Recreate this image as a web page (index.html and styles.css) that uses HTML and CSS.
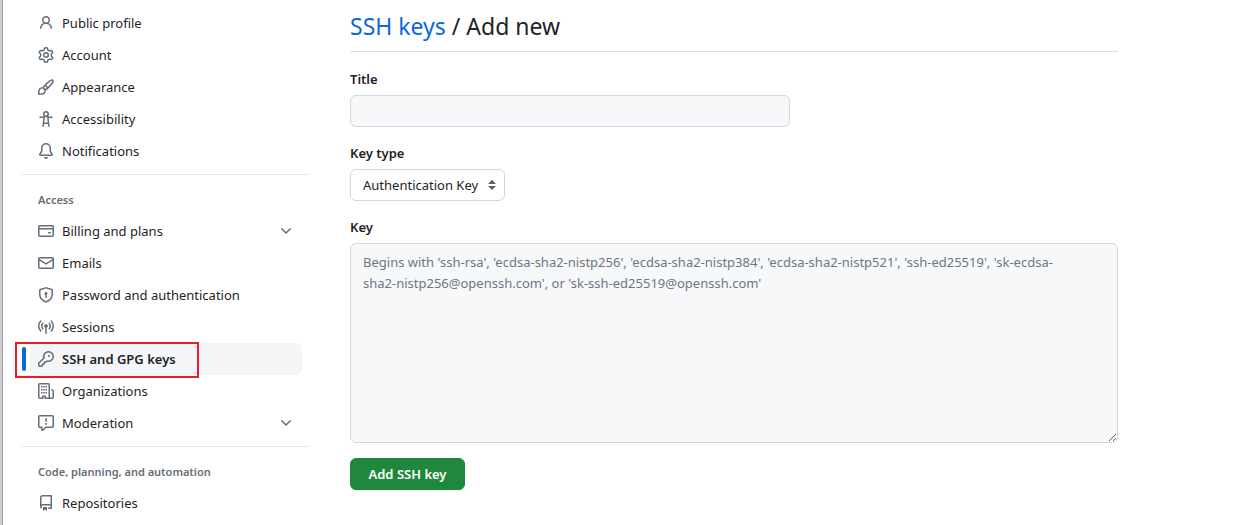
FILE: index.html
```html
<!DOCTYPE html>
<html lang="en">
<head>
  <meta charset="UTF-8">
  <meta name="viewport" content="width=device-width, initial-scale=1">
  <title>Add new SSH key</title>
  <link rel="stylesheet" href="styles.css">
</head>
<body>
  <div class="layout">
    <nav class="sidebar" aria-label="Settings">
      <ul class="nav-list">
        <li><a class="nav-item" href="#profile">
          <svg class="icon" viewBox="0 0 16 16"><path d="M10.561 8.073a6.005 6.005 0 0 1 3.432 5.142.75.75 0 1 1-1.498.07 4.5 4.5 0 0 0-8.99 0 .75.75 0 0 1-1.498-.07 6.004 6.004 0 0 1 3.431-5.142 3.999 3.999 0 1 1 5.123 0ZM10.5 5a2.5 2.5 0 1 0-5 0 2.5 2.5 0 0 0 5 0Z"/></svg>
          <span>Public profile</span>
        </a></li>
        <li><a class="nav-item" href="#account">
          <svg class="icon" viewBox="0 0 16 16"><path d="M8 0a8.2 8.2 0 0 1 .701.031C9.444.095 9.99.645 10.16 1.29l.288 1.107c.018.066.079.158.212.224.231.114.454.243.668.386.123.082.233.09.299.071l1.103-.303c.644-.176 1.392.021 1.82.63.27.385.506.792.704 1.218.315.675.111 1.422-.364 1.891l-.814.806c-.049.048-.098.147-.088.294.016.257.016.515 0 .772-.01.147.038.246.088.294l.814.806c.475.469.679 1.216.364 1.891a7.977 7.977 0 0 1-.704 1.217c-.428.61-1.176.807-1.82.63l-1.102-.302c-.067-.019-.177-.011-.3.071a5.909 5.909 0 0 1-.668.386c-.133.066-.194.158-.211.224l-.29 1.106c-.168.646-.715 1.196-1.458 1.26a8.006 8.006 0 0 1-1.402 0c-.743-.064-1.289-.614-1.458-1.26l-.289-1.106c-.018-.066-.079-.158-.212-.224a5.738 5.738 0 0 1-.668-.386c-.123-.082-.233-.09-.299-.071l-1.103.303c-.644.176-1.392-.021-1.82-.63a8.12 8.12 0 0 1-.704-1.218c-.315-.675-.111-1.422.363-1.891l.815-.806c.05-.048.098-.147.088-.294a6.214 6.214 0 0 1 0-.772c.01-.147-.038-.246-.088-.294l-.815-.806C.635 6.045.431 5.298.746 4.623a7.92 7.92 0 0 1 .704-1.217c.428-.61 1.176-.807 1.82-.63l1.102.302c.067.019.177.011.3-.071.214-.143.437-.272.668-.386.133-.066.194-.158.211-.224l.29-1.106C6.009.645 6.556.095 7.299.03 7.53.01 7.764 0 8 0Zm-.571 1.525c-.036.003-.108.036-.137.146l-.289 1.105c-.147.561-.549.967-.998 1.189-.173.086-.34.183-.5.29-.417.278-.97.423-1.529.27l-1.103-.303c-.109-.03-.175.016-.195.045-.22.312-.412.644-.573.99-.014.031-.021.11.059.19l.815.806c.411.406.562.957.53 1.456a4.709 4.709 0 0 0 0 .582c.032.499-.119 1.05-.53 1.456l-.815.806c-.081.08-.073.159-.059.19.162.346.353.677.573.989.02.03.085.076.195.046l1.102-.303c.56-.153 1.113-.008 1.53.27.161.107.328.204.501.29.447.222.85.629.997 1.189l.289 1.105c.029.109.101.143.137.146a6.6 6.6 0 0 0 1.142 0c.036-.003.108-.036.137-.146l.289-1.105c.147-.561.549-.967.998-1.189.173-.086.34-.183.5-.29.417-.278.97-.423 1.529-.27l1.103.303c.109.029.175-.016.195-.045.22-.313.411-.644.573-.99.014-.031.021-.11-.059-.19l-.815-.806c-.411-.406-.562-.957-.53-1.456a4.709 4.709 0 0 0 0-.582c-.032-.499.119-1.05.53-1.456l.815-.806c.081-.08.073-.159.059-.19a6.464 6.464 0 0 0-.573-.989c-.02-.03-.085-.076-.195-.046l-1.102.303c-.56.153-1.113.008-1.53-.27a4.44 4.44 0 0 0-.501-.29c-.447-.222-.85-.629-.997-1.189l-.289-1.105c-.029-.11-.101-.143-.137-.146a6.6 6.6 0 0 0-1.142 0ZM11 8a3 3 0 1 1-6 0 3 3 0 0 1 6 0ZM9.5 8a1.5 1.5 0 1 0-3.001.001A1.5 1.5 0 0 0 9.5 8Z"/></svg>
          <span>Account</span>
        </a></li>
        <li><a class="nav-item" href="#appearance">
          <svg class="icon" viewBox="0 0 16 16"><path d="M11.134 1.535c.7-.509 1.416-.942 2.076-1.155.649-.21 1.463-.267 2.069.34.603.601.568 1.411.368 2.07-.202.668-.624 1.39-1.125 2.096-1.011 1.424-2.496 2.987-3.775 4.249-1.098 1.084-2.132 1.839-3.04 2.3a3.744 3.744 0 0 1-1.055 3.217c-.431.431-1.065.691-1.657.861-.614.177-1.294.287-1.914.357A21.151 21.151 0 0 1 .797 16H.743l.007-.75H.749L.742 16a.75.75 0 0 1-.743-.742l.743-.008-.742.007v-.054a21.25 21.25 0 0 1 .13-2.284c.067-.647.187-1.287.358-1.914.17-.591.43-1.226.86-1.657a3.746 3.746 0 0 1 3.227-1.054c.466-.893 1.225-1.907 2.314-2.982 1.271-1.255 2.833-2.75 4.245-3.777ZM1.62 13.089c-.051.464-.086.929-.104 1.395.466-.018.932-.053 1.396-.104a10.511 10.511 0 0 0 1.668-.309c.526-.151.856-.325 1.011-.48a2.25 2.25 0 1 0-3.182-3.182c-.155.155-.329.485-.48 1.01a10.515 10.515 0 0 0-.309 1.67Zm10.396-10.34c-1.224.89-2.605 2.189-3.822 3.384l1.718 1.718c1.21-1.205 2.51-2.597 3.387-3.833.47-.662.78-1.227.912-1.662.134-.444.032-.551.009-.575h-.001V1.78c-.014-.014-.113-.113-.548.027-.432.14-.995.462-1.655.942Zm-4.832 7.266-.001.001a9.859 9.859 0 0 0 1.63-1.142L7.155 7.216a9.7 9.7 0 0 0-1.161 1.607c.482.302.889.71 1.19 1.192Z"/></svg>
          <span>Appearance</span>
        </a></li>
        <li><a class="nav-item" href="#accessibility">
          <svg class="icon" viewBox="0 0 16 16"><path d="M9.923 5.302c.063.063.122.129.178.198H14A.75.75 0 0 1 14 7h-3.3l.578 5.163.362 2.997a.75.75 0 0 1-1.49.18L9.868 13H6.132l-.282 2.34a.75.75 0 0 1-1.49-.18l.362-2.997L5.3 7H2a.75.75 0 0 1 0-1.5h3.9a2.54 2.54 0 0 1 .176-.198 3 3 0 1 1 3.847 0ZM9.2 7.073h-.001a1.206 1.206 0 0 0-2.398 0L6.305 11.5h3.39ZM9.5 3a1.5 1.5 0 1 0-3.001.001A1.5 1.5 0 0 0 9.5 3Z"/></svg>
          <span>Accessibility</span>
        </a></li>
        <li><a class="nav-item" href="#notifications">
          <svg class="icon" viewBox="0 0 16 16"><path d="M8 16a2 2 0 0 0 1.985-1.75c.017-.137-.097-.25-.235-.25h-3.5c-.138 0-.252.113-.235.25A2 2 0 0 0 8 16ZM3 5a5 5 0 0 1 10 0v2.947c0 .05.015.098.042.139l1.703 2.555A1.519 1.519 0 0 1 13.482 13H2.518a1.516 1.516 0 0 1-1.263-2.36l1.703-2.554A.255.255 0 0 0 3 7.947Zm5-3.5A3.5 3.5 0 0 0 4.5 5v2.947c0 .346-.102.683-.294.97l-1.703 2.556a.017.017 0 0 0-.003.01l.001.006c0 .002.002.004.004.006l.006.004.007.001h10.964l.007-.001.006-.004.004-.006.001-.007a.017.017 0 0 0-.003-.01l-1.703-2.554a1.745 1.745 0 0 1-.294-.97V5A3.5 3.5 0 0 0 8 1.5Z"/></svg>
          <span>Notifications</span>
        </a></li>
      </ul>

      <h2 class="nav-heading">Access</h2>
      <ul class="nav-list">
        <li><button class="nav-item" type="button" aria-expanded="false">
          <svg class="icon" viewBox="0 0 16 16"><path d="M10.75 9a.75.75 0 0 0 0 1.5h1.5a.75.75 0 0 0 0-1.5h-1.5Z"/><path d="M0 3.75C0 2.784.784 2 1.75 2h12.5c.966 0 1.75.784 1.75 1.75v8.5A1.75 1.75 0 0 1 14.25 14H1.75A1.75 1.75 0 0 1 0 12.25ZM14.5 6.5h-13v5.75c0 .138.112.25.25.25h12.5a.25.25 0 0 0 .25-.25Zm0-2.75a.25.25 0 0 0-.25-.25H1.75a.25.25 0 0 0-.25.25V5h13Z"/></svg>
          <span>Billing and plans</span>
          <svg class="icon chevron" viewBox="0 0 16 16"><path d="M12.78 5.22a.749.749 0 0 1 0 1.06l-4.25 4.25a.749.749 0 0 1-1.06 0L3.22 6.28a.749.749 0 1 1 1.06-1.06L8 8.939l3.72-3.719a.749.749 0 0 1 1.06 0Z"/></svg>
        </button></li>
        <li><a class="nav-item" href="#emails">
          <svg class="icon" viewBox="0 0 16 16"><path d="M1.75 2h12.5c.966 0 1.75.784 1.75 1.75v8.5A1.75 1.75 0 0 1 14.25 14H1.75A1.75 1.75 0 0 1 0 12.25v-8.5C0 2.784.784 2 1.75 2ZM1.5 12.251c0 .138.112.25.25.25h12.5a.25.25 0 0 0 .25-.25V5.809L8.38 9.397a.75.75 0 0 1-.76 0L1.5 5.809v6.442Zm13-8.181v-.32a.25.25 0 0 0-.25-.25H1.75a.25.25 0 0 0-.25.25v.32L8 7.88Z"/></svg>
          <span>Emails</span>
        </a></li>
        <li><a class="nav-item" href="#security">
          <svg class="icon" viewBox="0 0 16 16"><path d="m8.533.133 5.25 1.68A1.75 1.75 0 0 1 15 3.48V7c0 1.566-.32 3.182-1.303 4.682-.983 1.498-2.585 2.813-5.032 3.855a1.697 1.697 0 0 1-1.33 0c-2.447-1.042-4.049-2.357-5.032-3.855C1.32 10.182 1 8.566 1 7V3.48a1.75 1.75 0 0 1 1.217-1.667l5.25-1.68a1.748 1.748 0 0 1 1.066 0Zm-.61 1.429.001.001-5.25 1.68a.251.251 0 0 0-.174.237V7c0 1.36.275 2.666 1.057 3.859.784 1.194 2.121 2.342 4.366 3.298a.196.196 0 0 0 .154 0c2.245-.957 3.582-2.103 4.366-3.297C13.225 9.666 13.5 8.358 13.5 7V3.48a.25.25 0 0 0-.174-.238l-5.25-1.68a.25.25 0 0 0-.153 0ZM9.5 6.5c0 .536-.286 1.032-.75 1.3v2.45a.75.75 0 0 1-1.5 0V7.8A1.5 1.5 0 1 1 9.5 6.5Z"/></svg>
          <span>Password and authentication</span>
        </a></li>
        <li><a class="nav-item" href="#sessions">
          <svg class="icon" viewBox="0 0 16 16"><path d="M8.75 8.582v5.668a.75.75 0 0 1-1.5 0V8.582a1.75 1.75 0 1 1 1.5 0Zm3.983-7.125a.75.75 0 0 1 1.06.026A7.976 7.976 0 0 1 16 7c0 2.139-.84 4.083-2.207 5.517a.75.75 0 1 1-1.086-1.034A6.474 6.474 0 0 0 14.5 7a6.474 6.474 0 0 0-1.793-4.483.75.75 0 0 1 .026-1.06Zm-9.466 0c.3.286.312.76.026 1.06A6.474 6.474 0 0 0 1.5 7a6.47 6.47 0 0 0 1.793 4.483.75.75 0 0 1-1.086 1.034A7.973 7.973 0 0 1 0 7c0-2.139.84-4.083 2.207-5.517a.75.75 0 0 1 1.06-.026Zm8.556 2.321A4.988 4.988 0 0 1 13 7a4.988 4.988 0 0 1-1.177 3.222.75.75 0 1 1-1.146-.967A3.487 3.487 0 0 0 11.5 7c0-.86-.309-1.645-.823-2.255a.75.75 0 0 1 1.146-.967Zm-6.492.958A3.48 3.48 0 0 0 4.5 7a3.48 3.48 0 0 0 .823 2.255.75.75 0 0 1-1.146.967A4.981 4.981 0 0 1 3 7a4.982 4.982 0 0 1 1.188-3.236.75.75 0 1 1 1.143.972Z"/></svg>
          <span>Sessions</span>
        </a></li>
        <li><a class="nav-item active" href="#keys" aria-current="page">
          <svg class="icon" viewBox="0 0 16 16"><path d="M10.5 0a5.499 5.499 0 1 1-1.288 10.848l-.932.932a.749.749 0 0 1-.53.22H7v.75a.749.749 0 0 1-.22.53l-.5.5a.749.749 0 0 1-.53.22H5v.75a.749.749 0 0 1-.22.53l-.5.5a.749.749 0 0 1-.53.22h-2A1.75 1.75 0 0 1 0 14.25v-2c0-.199.079-.389.22-.53l4.932-4.932A5.5 5.5 0 0 1 10.5 0Zm-4 5.5c-.001.431.069.86.205 1.269a.75.75 0 0 1-.181.768L1.5 12.56v1.69c0 .138.112.25.25.25h1.69l.06-.06v-1.19a.75.75 0 0 1 .75-.75h1.19l.06-.06v-1.19a.75.75 0 0 1 .75-.75h1.19l1.023-1.025a.75.75 0 0 1 .768-.18A4 4 0 1 0 6.5 5.5ZM11 6a1 1 0 1 1 0-2 1 1 0 0 1 0 2Z"/></svg>
          <span>SSH and GPG keys</span>
          <span class="marker"></span>
        </a></li>
        <li><a class="nav-item" href="#organizations">
          <svg class="icon" viewBox="0 0 16 16"><path d="M1.75 16A1.75 1.75 0 0 1 0 14.25V1.75C0 .784.784 0 1.75 0h8.5C11.216 0 12 .784 12 1.75v12.5c0 .085-.006.168-.018.25h2.268a.25.25 0 0 0 .25-.25V8.285a.25.25 0 0 0-.111-.208l-1.055-.703a.749.749 0 1 1 .832-1.248l1.055.703c.487.325.779.871.779 1.456v5.965A1.75 1.75 0 0 1 14.25 16h-3.5a.766.766 0 0 1-.197-.026c-.099.017-.2.026-.303.026h-3a.75.75 0 0 1-.75-.75V14h-1v1.25a.75.75 0 0 1-.75.75Zm-.25-1.75c0 .138.112.25.25.25H4v-1.25a.75.75 0 0 1 .75-.75h2.5a.75.75 0 0 1 .75.75v1.25h2.25a.25.25 0 0 0 .25-.25V1.75a.25.25 0 0 0-.25-.25h-8.5a.25.25 0 0 0-.25.25ZM3 3h1.5v1.5H3Zm2.25 0h1.5v1.5h-1.5ZM7.5 3H9v1.5H7.5ZM3 6h1.5v1.5H3Zm2.25 0h1.5v1.5h-1.5ZM7.5 6H9v1.5H7.5ZM3 9h1.5v1.5H3Zm2.25 0h1.5v1.5h-1.5ZM7.5 9H9v1.5H7.5Z"/></svg>
          <span>Organizations</span>
        </a></li>
        <li><button class="nav-item" type="button" aria-expanded="false">
          <svg class="icon" viewBox="0 0 16 16"><path d="M0 1.75C0 .784.784 0 1.75 0h12.5C15.216 0 16 .784 16 1.75v9.5A1.75 1.75 0 0 1 14.25 13H8.06l-2.573 2.573A1.458 1.458 0 0 1 3 14.543V13H1.75A1.75 1.75 0 0 1 0 11.25Zm1.75-.25a.25.25 0 0 0-.25.25v9.5c0 .138.112.25.25.25h2a.75.75 0 0 1 .75.75v2.19l2.72-2.72a.749.749 0 0 1 .53-.22h6.5a.25.25 0 0 0 .25-.25v-9.5a.25.25 0 0 0-.25-.25Zm7 2.25v2.5a.75.75 0 0 1-1.5 0v-2.5a.75.75 0 0 1 1.5 0ZM9 9a1 1 0 1 1-2 0 1 1 0 0 1 2 0Z"/></svg>
          <span>Moderation</span>
          <svg class="icon chevron" viewBox="0 0 16 16"><path d="M12.78 5.22a.749.749 0 0 1 0 1.06l-4.25 4.25a.749.749 0 0 1-1.06 0L3.22 6.28a.749.749 0 1 1 1.06-1.06L8 8.939l3.72-3.719a.749.749 0 0 1 1.06 0Z"/></svg>
        </button></li>
      </ul>

      <h2 class="nav-heading">Code, planning, and automation</h2>
      <ul class="nav-list">
        <li><a class="nav-item" href="#repositories">
          <svg class="icon" viewBox="0 0 16 16"><path d="M2 2.5A2.5 2.5 0 0 1 4.5 0h8.75a.75.75 0 0 1 .75.75v12.5a.75.75 0 0 1-.75.75h-2.5a.75.75 0 0 1 0-1.5h1.75v-2h-8a1 1 0 0 0-.714 1.7.75.75 0 1 1-1.072 1.05A2.495 2.495 0 0 1 2 11.5Zm10.5-1h-8a1 1 0 0 0-1 1v6.708A2.486 2.486 0 0 1 4.5 9h8ZM5 12.25a.25.25 0 0 1 .25-.25h3.5a.25.25 0 0 1 .25.25v3.25a.25.25 0 0 1-.4.2l-1.45-1.087a.249.249 0 0 0-.3 0L5.4 15.7a.25.25 0 0 1-.4-.2Z"/></svg>
          <span>Repositories</span>
        </a></li>
      </ul>
    </nav>

    <main class="content">
      <h1 class="page-title"><a href="#keys">SSH keys</a> / Add new</h1>
      <form class="key-form">
        <label for="title">Title</label>
        <input class="control title-input" type="text" id="title">

        <label for="key-type">Key type</label>
        <select class="control key-type" id="key-type">
          <option>Authentication Key</option>
          <option>Signing Key</option>
        </select>

        <label for="key">Key</label>
        <textarea class="control key-input" id="key" placeholder="Begins with 'ssh-rsa', 'ecdsa-sha2-nistp256', 'ecdsa-sha2-nistp384', 'ecdsa-sha2-nistp521', 'ssh-ed25519', 'sk-ecdsa-sha2-nistp256@openssh.com', or 'sk-ssh-ed25519@openssh.com'"></textarea>

        <button class="submit" type="submit">Add SSH key</button>
      </form>
    </main>
  </div>
</body>
</html>
```
FILE: styles.css
```css
* {
  box-sizing: border-box;
}
body {
  margin: 0;
  min-height: 100vh;
  border-left: 2px solid #cdcdcd;
  background: #fff;
  color: #1f2328;
  font-family: "Segoe UI", "Noto Sans", sans-serif;
  font-size: 13px;
  line-height: 20px;
}
a {
  color: #0969da;
  text-decoration: none;
}
.layout {
  display: grid;
  grid-template-columns: 288px minmax(0, 1fr);
  gap: 40px;
  box-sizing: content-box;
  max-width: 1096px;
  min-height: 100vh;
  padding: 0 19px;
  border-left: 1px solid #a0a0a0;
}

/* Sidebar */
.sidebar {
  padding-top: 7px;
}
.nav-list {
  list-style: none;
  margin: 0;
  padding: 0 8px;
}
.nav-item {
  position: relative;
  display: flex;
  align-items: center;
  gap: 8px;
  width: 100%;
  height: 32px;
  padding: 0 8px;
  border: 0;
  border-radius: 6px;
  background: none;
  color: #1f2328;
  font: inherit;
  text-align: left;
}
.icon {
  flex: none;
  width: 16px;
  height: 16px;
  fill: #656d76;
}
.chevron {
  margin-left: auto;
}
.active {
  background: #f4f5f6;
  font-weight: 600;
}
.active::before {
  content: "";
  position: absolute;
  left: -8px;
  top: 4px;
  width: 4px;
  height: 24px;
  border-radius: 6px;
  background: #0969da;
}
.marker {
  position: absolute;
  left: -15px;
  top: -1px;
  width: 184px;
  height: 36px;
  border: 2px solid #ed1c24;
}
.nav-heading {
  margin: 7px 0 0;
  padding: 16px 16px 6px;
  border-top: 1px solid #e6e8eb;
  color: #656d76;
  font-size: 11px;
  font-weight: 600;
  line-height: 18px;
}

/* Form */
.content {
  padding-top: 8px;
}
.page-title {
  margin: 0 0 16px;
  padding-bottom: 7px;
  border-bottom: 1px solid #d8dee4;
  font-size: 23px;
  font-weight: 400;
  line-height: 36px;
}
.key-form {
  display: flex;
  flex-direction: column;
  align-items: flex-start;
}
.key-form label {
  margin: 1px 0 6px;
  font-weight: 600;
}
.control {
  height: 32px;
  margin: 0 0 15px;
  padding: 5px 12px;
  border: 1px solid #d0d7de;
  border-radius: 6px;
  background-color: #f6f8fa;
  color: #1f2328;
  font: inherit;
}
.title-input {
  width: 440px;
  max-width: 100%;
}
.key-type {
  width: 155px;
  padding-right: 20px;
  appearance: none;
  background: #fff url("data:image/svg+xml,%3Csvg xmlns='http://www.w3.org/2000/svg' width='16' height='16' fill='%23586069'%3E%3Cpath d='M4.427 9.427l3.396 3.396a.25.25 0 00.354 0l3.396-3.396A.25.25 0 0011.396 9H4.604a.25.25 0 00-.177.427zM4.423 6.47L7.82 3.072a.25.25 0 01.354 0L11.57 6.47a.25.25 0 01-.177.427H4.6a.25.25 0 01-.177-.427z'/%3E%3C/svg%3E") no-repeat right 4px center;
}
.key-input {
  width: 100%;
  height: 200px;
  padding: 8px 40px 8px 12px;
  line-height: 21px;
  resize: vertical;
}
.key-input::placeholder {
  color: #6e7781;
}
.submit {
  min-width: 115px;
  height: 32px;
  padding: 0 16px;
  border: 1px solid #1f883d;
  border-radius: 6px;
  background: #1f883d;
  box-shadow: 0 1px 0 #ebedef;
  color: #fff;
  font: inherit;
  font-weight: 600;
}
```
